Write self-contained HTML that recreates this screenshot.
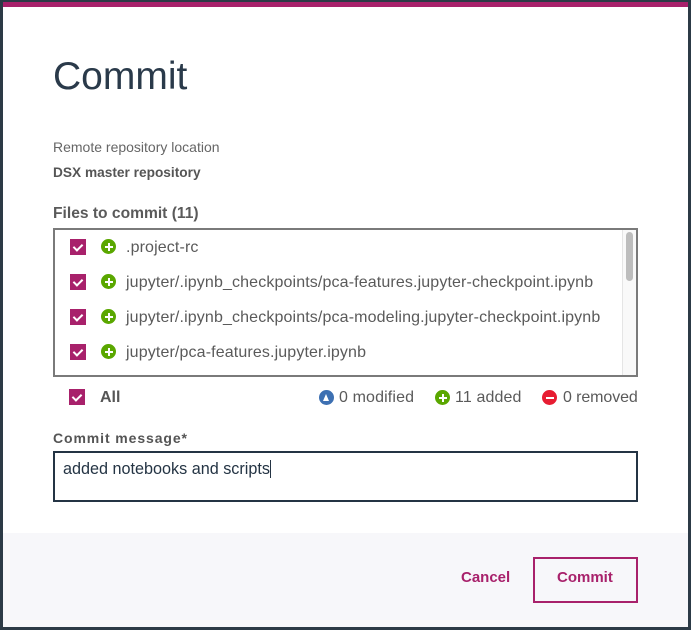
<!DOCTYPE html>
<html><head><meta charset="utf-8"><style>
*{margin:0;padding:0;box-sizing:border-box}
body{width:691px;height:630px;background:#2c3a46;position:relative;overflow:hidden;font-family:"Liberation Sans",sans-serif}
.dlg{position:absolute;left:3px;top:2px;width:685px;height:625px;background:#fff;border-top:5px solid #a8216b}
.a{position:absolute;white-space:nowrap}
.foot{position:absolute;left:3px;top:533px;width:685px;height:94px;background:#f7f7fa}
.cb{position:absolute;width:16px;height:16px;background:#a8216b}
.cb:after{content:"";position:absolute;left:5px;top:3px;width:4px;height:7px;border:solid #fff;border-width:0 2px 2px 0;transform:rotate(45deg)}
.ic{position:absolute;width:15px;height:15px;border-radius:50%}
.plus{background:#5aa700}
.plus:before{content:"";position:absolute;left:3.5px;top:6.5px;width:8px;height:2px;background:#fff}
.plus:after{content:"";position:absolute;left:6.5px;top:3.5px;width:2px;height:8px;background:#fff}
.minus{background:#e71d32}
.minus:before{content:"";position:absolute;left:3.5px;top:6.5px;width:8px;height:2px;background:#fff}
.mod{background:#3d70b2}
.mod:before{content:"";position:absolute;left:4px;top:3.5px;border-left:3.5px solid transparent;border-right:3.5px solid transparent;border-bottom:7px solid #fff}
.f{font-size:16px;letter-spacing:0.13px;color:#5a5a5a}
</style></head><body>
<div class="dlg"></div>
<div class="foot"></div>
<div class="a" style="left:53px;top:55px;font-size:39px;color:#2a3a4a">Commit</div>
<div class="a" style="left:53px;top:139px;font-size:14px;color:#666">Remote repository location</div>
<div class="a" style="left:53px;top:165px;font-size:13.7px;color:#555;font-weight:bold">DSX master repository</div>
<div class="a" style="left:53px;top:205px;font-size:15.6px;color:#5a5a5a;font-weight:bold">Files to commit (11)</div>
<div class="a" style="left:53px;top:228px;width:585px;height:149px;border:2px solid #7a7a7a"></div>
<div class="a" style="left:622px;top:230px;width:14px;height:145px;background:#f9f9f9;border-left:1px solid #e5e5e5"></div>
<div class="a" style="left:626px;top:232px;width:7px;height:49px;background:#bdbdbd;border-radius:4px"></div>
<div class="cb" style="left:70px;top:239px"></div><div class="ic plus" style="left:101px;top:239px"></div><div class="a f" style="left:126px;top:239px">.project-rc</div>
<div class="cb" style="left:70px;top:274px"></div><div class="ic plus" style="left:101px;top:274px"></div><div class="a f" style="left:126px;top:274px">jupyter/.ipynb_checkpoints/pca-features.jupyter-checkpoint.ipynb</div>
<div class="cb" style="left:70px;top:309px"></div><div class="ic plus" style="left:101px;top:309px"></div><div class="a f" style="left:126px;top:309px">jupyter/.ipynb_checkpoints/pca-modeling.jupyter-checkpoint.ipynb</div>
<div class="cb" style="left:70px;top:344px"></div><div class="ic plus" style="left:101px;top:344px"></div><div class="a f" style="left:126px;top:344px">jupyter/pca-features.jupyter.ipynb</div>
<div class="cb" style="left:69px;top:389px"></div>
<div class="a" style="left:100px;top:389px;font-size:16px;color:#555;font-weight:bold">All</div>
<div class="ic mod" style="left:319px;top:390px"></div><div class="a f" style="left:339px;top:389px">0 modified</div>
<div class="ic plus" style="left:435px;top:390px"></div><div class="a f" style="left:455px;top:389px">11 added</div>
<div class="ic minus" style="left:542px;top:390px"></div><div class="a f" style="left:563px;top:389px;letter-spacing:-0.1px">0 removed</div>
<div class="a" style="left:53px;top:430px;font-size:14px;letter-spacing:0.9px;color:#555;font-weight:bold">Commit message*</div>
<div class="a" style="left:53px;top:451px;width:585px;height:51px;border:2px solid #243444"></div>
<div class="a" style="left:63px;top:460px;font-size:16.2px;color:#243444">added notebooks and scripts<span style="display:inline-block;width:1px;height:18px;background:#243444;vertical-align:-4px"></span></div>
<div class="a" style="left:461px;top:569px;font-size:15px;color:#a8216b;font-weight:bold">Cancel</div>
<div class="a" style="left:533px;top:557px;width:105px;height:46px;border:2px solid #a8216b"></div>
<div class="a" style="left:557px;top:569px;font-size:15px;color:#a8216b;font-weight:bold">Commit</div>
</body></html>
